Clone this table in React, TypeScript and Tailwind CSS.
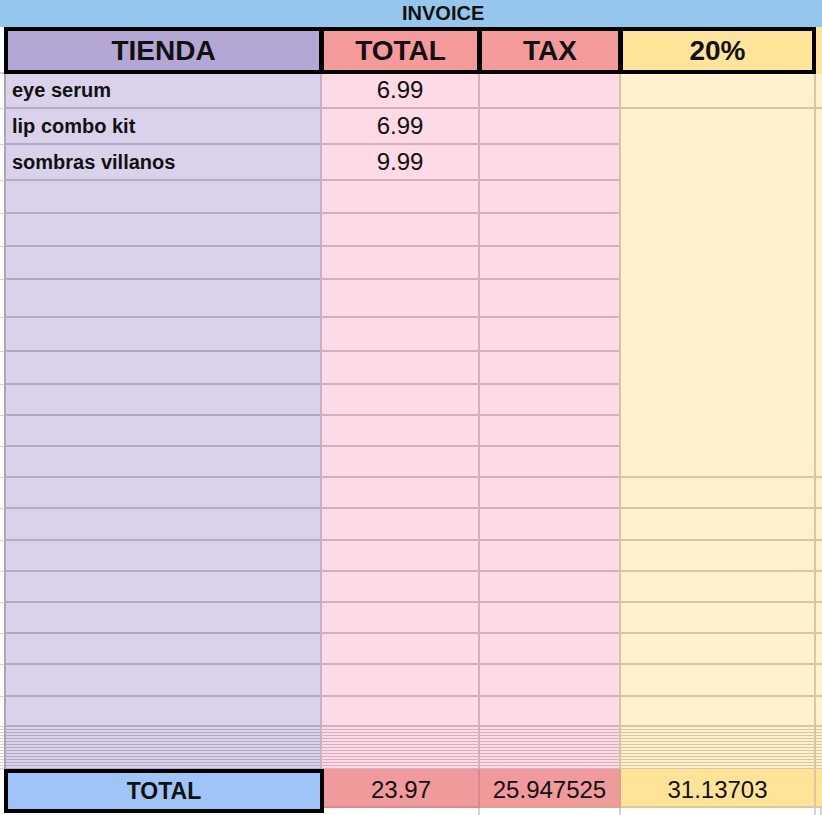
import type { ReactNode } from "react";

// row heights of the sheet body (line at the bottom of each)
const ROWS = [
  "h-[35px]", "h-[36px]", "h-[36px]", "h-[33px]", "h-[33px]", "h-[33px]", "h-[38px]",
  "h-[34px]", "h-[33px]", "h-[31px]", "h-[31px]", "h-[31px]", "h-[31px]", "h-[32px]",
  "h-[31px]", "h-[31px]", "h-[31px]", "h-[31px]", "h-[32px]", "h-[30px]",
];
// hidden rows squeezed together above the total row
const SQUASHED = Array.from({ length: 14 }, () => "h-[3px]");

const items = [
  { name: "eye serum", total: "6.99" },
  { name: "lip combo kit", total: "6.99" },
  { name: "sombras villanos", total: "9.99" },
];

const HeadCell = ({ className, children }: { className: string; children: ReactNode }) => (
  <div className={`flex items-center justify-center ${className}`}>
    <span className="text-[28px] font-bold leading-none">{children}</span>
  </div>
);

const TotalCell = ({ className, line, children }: { className: string; line: string; children?: ReactNode }) => (
  <div className="flex flex-col h-full">
    <div className={`h-[39px] flex items-end justify-center pb-[4px] border-b-2 ${className} ${line}`}>
      <span className="text-[24px] leading-none">{children}</span>
    </div>
    <div className="flex-1 border-r-2 border-[#d3d3d3]" />
  </div>
);

export default function App() {
  return (
    <div className="w-[822px] h-[815px] overflow-hidden bg-white text-[#111] font-['Liberation_Sans',Arial,sans-serif]">
      {/* title bar */}
      <div className="h-[27px] bg-[#95c6ec] flex items-end pb-[4px] pl-[402px]">
        <span className="text-[20px] font-bold leading-none">INVOICE</span>
      </div>

      {/* header row */}
      <div className="flex h-[47px]">
        <div className="w-[4px] border-b-2 border-[#cfcfcf]" />
        <div className="flex w-[812px] gap-[5px] bg-black p-[4px]">
          <HeadCell className="w-[311px] bg-[#b4a7d6]">TIENDA</HeadCell>
          <HeadCell className="w-[153px] bg-[#f49a9a]">TOTAL</HeadCell>
          <HeadCell className="w-[136px] bg-[#f49a9a]">TAX</HeadCell>
          <HeadCell className="w-[189px] bg-[#ffe599]">20%</HeadCell>
        </div>
        <div className="flex-1 bg-[#ffe599]" />
      </div>

      {/* body */}
      <div className="flex">
        <div className="w-[6px] flex flex-col bg-white border-r-2 border-[#aba6b3]">
          {[...ROWS, ...SQUASHED].map((h, i) => (
            <div key={i} className={`${h} border-b border-[#d4d4d4]`} />
          ))}
        </div>

        <div className="w-[316px] flex flex-col bg-[#dad2ea] border-r-2 border-[#cdb0c4]">
          {ROWS.map((h, i) => (
            <div key={i} className={`${h} flex items-end pl-[6px] pb-[7px] border-b-2 border-[#b4a9c4]`}>
              {items[i] && <span className="text-[20px] font-bold leading-none">{items[i].name}</span>}
            </div>
          ))}
          {SQUASHED.map((h, i) => (
            <div key={`s${i}`} className={`${h} border-b border-[#b4a9c4]`} />
          ))}
        </div>

        <div className="w-[158px] flex flex-col bg-[#fddae5] border-r-2 border-[#d4afc0]">
          {ROWS.map((h, i) => (
            <div key={i} className={`${h} flex items-end justify-center pb-[5px] border-b-2 border-[#d4afc0]`}>
              {items[i] && <span className="text-[24px] leading-none">{items[i].total}</span>}
            </div>
          ))}
          {SQUASHED.map((h, i) => (
            <div key={`s${i}`} className={`${h} border-b border-[#d4afc0]`} />
          ))}
        </div>

        <div className="w-[141px] flex flex-col bg-[#fddae5] border-r-2 border-[#d8c3a6]">
          {[...ROWS, ...SQUASHED].map((h, i) => (
            <div key={i} className={`${h} ${i < ROWS.length ? "border-b-2" : "border-b"} border-[#d4afc0]`} />
          ))}
        </div>

        <div className="w-[195px] flex flex-col bg-[#fff2cc] border-r-2 border-[#dbc6a3]">
          <div className="h-[35px] border-b-2 border-[#dcc7a2]" />
          <div className="h-[369px] border-b-2 border-[#dcc7a2]" />
          {ROWS.slice(12).map((h, i) => (
            <div key={i} className={`${h} border-b-2 border-[#dcc7a2]`} />
          ))}
          {SQUASHED.map((h, i) => (
            <div key={`s${i}`} className={`${h} border-b border-[#dcc7a2]`} />
          ))}
        </div>

        <div className="flex-1 flex flex-col bg-[#fff2cc]">
          <div className="h-[35px] border-b-2 border-[#dcc7a2]" />
          <div className="h-[369px] border-b-2 border-[#dcc7a2]" />
          {ROWS.slice(12).map((h, i) => (
            <div key={i} className={`${h} border-b-2 border-[#dcc7a2]`} />
          ))}
          {SQUASHED.map((h, i) => (
            <div key={`s${i}`} className={`${h} border-b border-[#dcc7a2]`} />
          ))}
        </div>
      </div>

      {/* totals */}
      <div className="flex h-[46px]">
        <div className="w-[4px]" />
        <div className="w-[320px] h-[44px] flex items-center justify-center border-[4px] border-black bg-[#9fc5f8]">
          <span className="text-[23px] font-bold leading-none">TOTAL</span>
        </div>
        <div className="w-[156px]">
          <TotalCell className="bg-[#f19a9b] border-r-2" line="border-[#d68a90]">23.97</TotalCell>
        </div>
        <div className="w-[141px]">
          <TotalCell className="bg-[#f19a9b] border-r-2" line="border-[#d6a58c]">25.947525</TotalCell>
        </div>
        <div className="w-[195px]">
          <TotalCell className="bg-[#ffe498] border-r-2" line="border-[#dcc7a2]">31.13703</TotalCell>
        </div>
        <div className="flex-1">
          <TotalCell className="bg-[#ffe498]" line="border-[#dcc7a2]" />
        </div>
      </div>
    </div>
  );
}
